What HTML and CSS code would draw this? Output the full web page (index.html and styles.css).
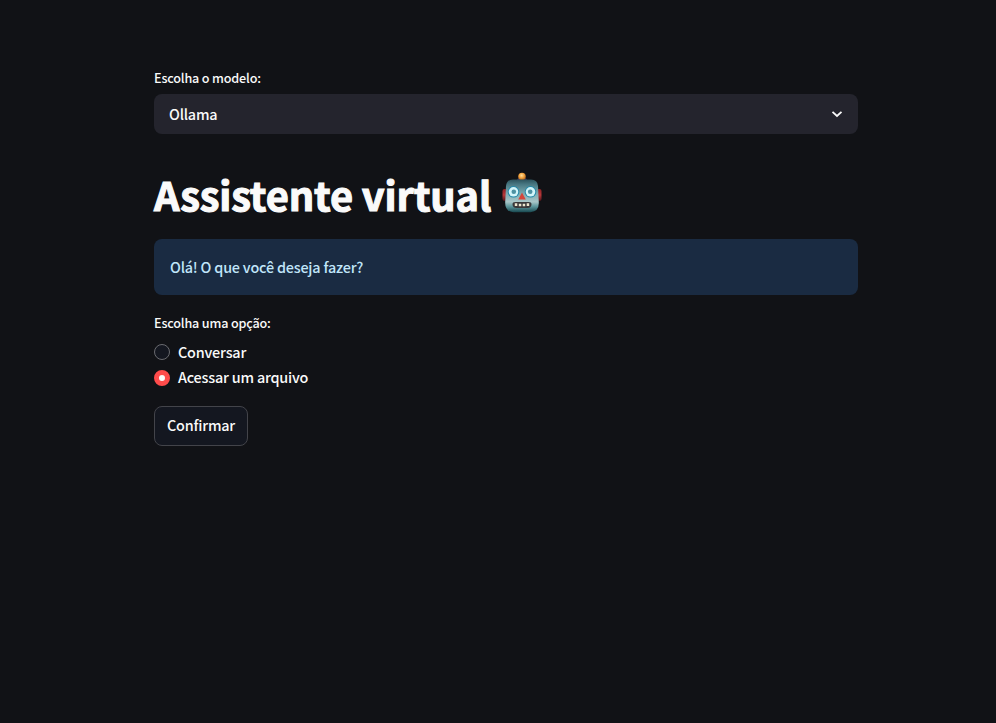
FILE: index.html
```html
<!DOCTYPE html>
<html lang="pt">
<head>
<meta charset="utf-8">
<title>Assistente virtual</title>
<link rel="stylesheet" href="styles.css">
</head>
<body>
<main class="page">
  <div class="label"><span>Escolha o modelo:</span></div>
  <div class="select">
    <span>Ollama</span>
    <svg class="chevron" viewBox="0 0 12 8"><path d="M1.500 1.800l4.500 4.200 4.500-4.200"/></svg>
  </div>
  <h1 class="title">
    <span class="title-text">Assistente virtual</span>
    <svg class="robot" viewBox="0 0 40 42" role="img">
      <defs>
        <linearGradient id="face" x1="0" y1="0" x2="0" y2="1">
          <stop offset="0" stop-color="#2c525c"/>
          <stop offset=".15" stop-color="#487883"/>
          <stop offset=".45" stop-color="#7fadb3"/>
          <stop offset=".68" stop-color="#a9c6c8"/>
          <stop offset=".82" stop-color="#5d979d"/>
          <stop offset="1" stop-color="#17474f"/>
        </linearGradient>
        <linearGradient id="ear" x1="0" y1="0" x2="0" y2="1">
          <stop offset="0" stop-color="#8e2225"/>
          <stop offset=".5" stop-color="#b9383a"/>
          <stop offset="1" stop-color="#4e151a"/>
        </linearGradient>
        <radialGradient id="bulb" cx=".45" cy=".35" r=".65">
          <stop offset="0" stop-color="#ffe0a0"/>
          <stop offset=".5" stop-color="#f2a43f"/>
          <stop offset="1" stop-color="#a95c18"/>
        </radialGradient>
      </defs>
      <rect x="0.500" y="17" width="5" height="12" rx="2" fill="url(#ear)"/>
      <rect x="34.500" y="17" width="5" height="12" rx="2" fill="url(#ear)"/>
      <path d="M15 8.500q0-3 5-3t5 3z" fill="#3e315c"/>
      <circle cx="20" cy="4.600" r="3.800" fill="url(#bulb)"/>
      <path d="M11 7.500h18q6.500 0 7 6.500l.8 16.500q.3 9-8.300 9.800h-17q-8.600-.8-8.300-9.800L4 14q.5-6.500 7-6.500z" fill="url(#face)"/>
      <circle cx="11.500" cy="19.800" r="5.800" fill="#248aaa"/>
      <circle cx="28.500" cy="19.800" r="5.800" fill="#248aaa"/>
      <circle cx="11.500" cy="19.800" r="4.800" fill="#d2f5fa"/>
      <circle cx="28.500" cy="19.800" r="4.800" fill="#d2f5fa"/>
      <circle cx="11.800" cy="19.800" r="2.300" fill="#4c92a3"/>
      <circle cx="28.200" cy="19.800" r="2.300" fill="#4c92a3"/>
      <path d="M20 20.500l3.800 7h-7.600z" fill="#d4463b"/>
      <path d="M13.500 30h13q3 0 3 2 0 4-4 4h-11q-4 0-4-4 0-2 3-2z" fill="#39383a"/>
      <path d="M12.800 31.300h2.500v2.600h-2.500zM16.800 31.700h2.500v2.600h-2.500zM20.700 31.700h2.500v2.600h-2.500zM24.700 31.300h2.500v2.600h-2.500z" fill="#ebe5cf"/>
    </svg>
  </h1>
  <div class="alert"><span>Olá! O que você deseja fazer?</span></div>
  <div class="label group-label"><span>Escolha uma opção:</span></div>
  <div class="option"><i class="radio"></i><span>Conversar</span></div>
  <div class="option"><i class="radio checked"></i><span>Acessar um arquivo</span></div>
  <button class="button" type="button">Confirmar</button>
</main>
</body>
</html>
```

FILE: styles.css
```css
* { box-sizing: border-box; }
body {
  margin: 0;
  background: #111216;
  color: #fafafa;
  font: 500 14.4px/24px "Noto Sans CJK SC", "Noto Sans", sans-serif;
  letter-spacing: -0.2px;
}
.page { width: 704px; margin-left: 154px; padding-top: 68px; }
.label { height: 20px; font-size: 12.600px; line-height: 20px; letter-spacing: -0.17px; }
.select {
  height: 40px;
  margin-top: 6px;
  padding: 0 15px;
  border-radius: 8px;
  background: #24242d;
  display: flex;
  align-items: center;
  justify-content: space-between;
}
.chevron { width: 12px; height: 8px; fill: none; stroke: #fafafa; stroke-width: 1.800; }
.title {
  display: flex;
  align-items: center;
  height: 53px;
  margin: 33px 0 19px;
  font-size: 39.800px;
  font-weight: 700;
  line-height: 53px;
  letter-spacing: -0.14px;
  white-space: nowrap;
}
.title-text { -webkit-text-stroke: 1.1px #fafafa; }
.robot { width: 40px; height: 42px; margin-left: 10.700px; margin-top: -1px; }
.alert {
  height: 56px;
  padding: 16px;
  border-radius: 8px;
  background: #1a2b42;
  color: #c0e6fa;
}
.group-label { margin-top: 18px; margin-bottom: 6px; }
.option { display: flex; align-items: center; gap: 8px; height: 25px; }
.option + .option { margin-top: 1px; }
.option + .option span { margin-top: -2px; }
.radio {
  width: 16px;
  height: 16px;
  border: 1px solid #6a6b70;
  border-radius: 50%;
  background: #141720;
}
.radio.checked { border: 5px solid #ff4b4b; background: #fafafa; }
.button {
  display: block;
  width: 94px;
  height: 40px;
  margin-top: 16px;
  padding: 0 0 2px;
  border: 1px solid #43444a;
  border-radius: 8px;
  background: #141720;
  color: #fafafa;
  font: inherit;
  letter-spacing: inherit;
}
```
